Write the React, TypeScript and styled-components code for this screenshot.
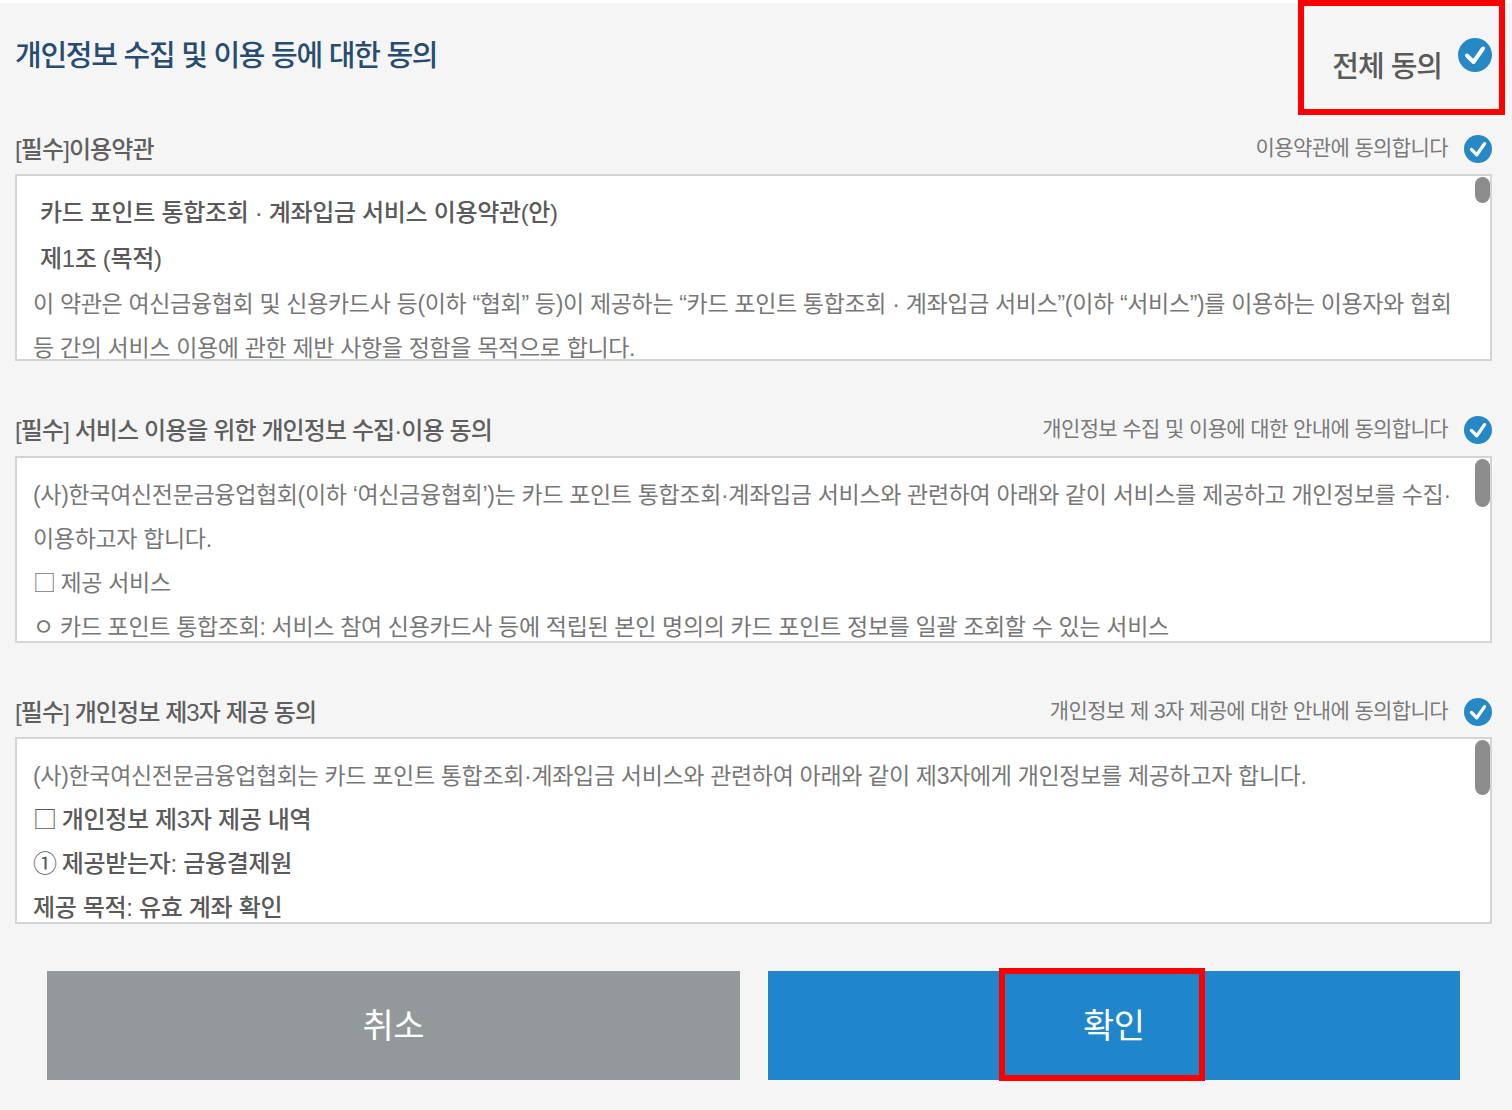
import React from 'react'
import styled, { createGlobalStyle } from 'styled-components'

const GlobalStyle = createGlobalStyle`
  html, body {
    margin: 0;
    padding: 0;
    background: #ffffff;
  }
  body {
    padding-top: 3px;
    font-family: "Liberation Sans", "Noto Sans CJK KR", sans-serif;
  }
`

const Page = styled.div`
  position: relative;
  box-sizing: border-box;
  width: 1512px;
  height: 1107px;
  padding: 0 20px 0 15px;
  background: #f5f5f5;
`

const Header = styled.header`
  display: flex;
  justify-content: space-between;
  height: 122px;
`

const Title = styled.h1`
  margin: 31px 0 0;
  font-size: 29px;
  line-height: 44px;
  font-weight: 500;
  letter-spacing: -1.25px;
  color: #284c70;
`

const AllAgree = styled.div`
  display: flex;
  align-items: flex-start;
  gap: 16px;
  padding-top: 35px;
`

const AllAgreeText = styled.span`
  margin-top: 7px;
  font-size: 29px;
  line-height: 44px;
  font-weight: 500;
  letter-spacing: -1px;
  color: #5a5a5a;
`

const Section = styled.section`
  margin-bottom: 45.5px;
`

const SectionHead = styled.div`
  display: flex;
  align-items: center;
  justify-content: space-between;
  height: 49px;
`

const SectionTitle = styled.h2`
  margin: 0;
  font-size: 24px;
  line-height: 36px;
  font-weight: 500;
  letter-spacing: -0.9px;
  color: #5f5f5f;
`

const AgreeRow = styled.div`
  display: flex;
  align-items: center;
  gap: 16px;
  margin-top: -2px;
`

const AgreeText = styled.span`
  margin-top: -2px;
  font-size: 21px;
  line-height: 32px;
  letter-spacing: -0.6px;
  color: #7a7a7a;
`

const TermsBox = styled.div<{ $top: number }>`
  position: relative;
  box-sizing: border-box;
  height: 187px;
  padding: ${p => p.$top}px 40px 0 16px;
  background: #ffffff;
  border: 2px solid #d4d4d4;
  overflow: hidden;
`

const Line = styled.p<{ $strong?: boolean; $indent?: boolean }>`
  margin: 0;
  padding-left: ${p => (p.$indent ? '7px' : '0')};
  font-size: ${p => (p.$strong ? '24px' : '23px')};
  line-height: ${p => (p.$indent ? '46px' : '44px')};
  font-weight: ${p => (p.$strong ? 500 : 400)};
  letter-spacing: -0.33px;
  color: ${p => (p.$strong ? '#5a5a5a' : '#777777')};
  white-space: nowrap;
`

const Mark = styled.span`
  font-family: "Noto Sans CJK KR", sans-serif;
  font-weight: 400;
  line-height: 0;
`

const Thumb = styled.div<{ $height: number }>`
  position: absolute;
  top: 1px;
  right: 0;
  width: 15px;
  height: ${p => p.$height}px;
  border-radius: 8px;
  background: #8c8c8c;
`

const Buttons = styled.div`
  display: flex;
  gap: 28px;
  margin: 47px 32px 0 32px;
`

const ActionButton = styled.button<{ $primary?: boolean }>`
  flex: 1;
  height: 109px;
  padding: 0 0 4px;
  border: 0;
  font-family: inherit;
  font-size: 34px;
  font-weight: 400;
  letter-spacing: -0.5px;
  color: #ffffff;
  background: ${p => (p.$primary ? '#2086cb' : '#93989b')};
`

const Highlight = styled.div`
  position: absolute;
  box-sizing: border-box;
  border: 6px solid #ff0000;
  pointer-events: none;
`

const HighlightAll = styled(Highlight)`
  left: 1298px;
  top: -3px;
  width: 207px;
  height: 115px;
`

const HighlightOk = styled(Highlight)`
  left: 999px;
  top: 965px;
  width: 206px;
  height: 113px;
`

const CheckIcon: React.FC<{ size: number }> = ({ size }) => (
  <svg width={size} height={size} viewBox="0 0 34 34" aria-hidden="true">
    <circle cx="17" cy="17" r="17" fill="#2689c6" />
    <path d="M9 17.5 L15.5 24 L25 10.5" fill="none" stroke="#ffffff" strokeWidth="4" strokeLinecap="round" strokeLinejoin="round" />
  </svg>
)

type TermsLine = { text: string; mark?: string; strong?: boolean; indent?: boolean }

const sections: { title: string; agree: string; thumb: number; top: number; lines: TermsLine[] }[] = [
  {
    title: '[필수]이용약관',
    agree: '이용약관에 동의합니다',
    thumb: 26,
    top: 14,
    lines: [
      { text: '카드 포인트 통합조회 · 계좌입금 서비스 이용약관(안)', strong: true, indent: true },
      { text: '제1조 (목적)', strong: true, indent: true },
      { text: '이 약관은 여신금융협회 및 신용카드사 등(이하 “협회” 등)이 제공하는 “카드 포인트 통합조회 · 계좌입금 서비스”(이하 “서비스”)를 이용하는 이용자와 협회' },
      { text: '등 간의 서비스 이용에 관한 제반 사항을 정함을 목적으로 합니다.' },
    ],
  },
  {
    title: '[필수] 서비스 이용을 위한 개인정보 수집·이용 동의',
    agree: '개인정보 수집 및 이용에 대한 안내에 동의합니다',
    thumb: 48,
    top: 15,
    lines: [
      { text: '(사)한국여신전문금융업협회(이하 ‘여신금융협회’)는 카드 포인트 통합조회·계좌입금 서비스와 관련하여 아래와 같이 서비스를 제공하고 개인정보를 수집·' },
      { text: '이용하고자 합니다.' },
      { mark: '□ ', text: '제공 서비스' },
      { text: 'ㅇ 카드 포인트 통합조회: 서비스 참여 신용카드사 등에 적립된 본인 명의의 카드 포인트 정보를 일괄 조회할 수 있는 서비스' },
    ],
  },
  {
    title: '[필수] 개인정보 제3자 제공 동의',
    agree: '개인정보 제 3자 제공에 대한 안내에 동의합니다',
    thumb: 55,
    top: 15,
    lines: [
      { text: '(사)한국여신전문금융업협회는 카드 포인트 통합조회·계좌입금 서비스와 관련하여 아래와 같이 제3자에게 개인정보를 제공하고자 합니다.' },
      { mark: '□ ', text: '개인정보 제3자 제공 내역', strong: true },
      { mark: '① ', text: '제공받는자: 금융결제원', strong: true },
      { text: '제공 목적: 유효 계좌 확인', strong: true },
    ],
  },
]

const App: React.FC = () => (
  <Page>
    <GlobalStyle />
    <Header>
      <Title>개인정보 수집 및 이용 등에 대한 동의</Title>
      <AllAgree>
        <AllAgreeText>전체 동의</AllAgreeText>
        <CheckIcon size={34} />
      </AllAgree>
    </Header>
    {sections.map(section => (
      <Section key={section.title}>
        <SectionHead>
          <SectionTitle>{section.title}</SectionTitle>
          <AgreeRow>
            <AgreeText>{section.agree}</AgreeText>
            <CheckIcon size={28} />
          </AgreeRow>
        </SectionHead>
        <TermsBox $top={section.top}>
          {section.lines.map(line => (
            <Line key={line.text} $strong={line.strong} $indent={line.indent}>
              {line.mark && <Mark>{line.mark}</Mark>}
              {line.text}
            </Line>
          ))}
          <Thumb $height={section.thumb} />
        </TermsBox>
      </Section>
    ))}
    <Buttons>
      <ActionButton>취소</ActionButton>
      <ActionButton $primary>확인</ActionButton>
    </Buttons>
    <HighlightAll />
    <HighlightOk />
  </Page>
)

export default App
